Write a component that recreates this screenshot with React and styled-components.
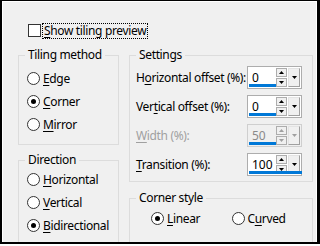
import React from "react";
import styled, { createGlobalStyle } from "styled-components";

const Global = createGlobalStyle`
  html, body { margin: 0; padding: 0; background: #fff; }
  body { font-family: "Noto Sans", "Open Sans", sans-serif; font-size: 12px; letter-spacing: -0.35px; color: #000; white-space: nowrap; }
`;

const Outer = styled.div`
  width: 320px;
  height: 244px;
  box-sizing: border-box;
  border: 2px solid #000;
  border-top-width: 1px;
  border-right-width: 3px;
  overflow: hidden;
`;

const Inner = styled.div`
  height: 100%;
  box-sizing: border-box;
  border-left: 1px solid #fff;
  border-top: 1px solid #fff;
  border-right: 1px solid #fff;
  background: #f0f0f0;
  padding: 21px 0 0 15px;
  display: flex;
  flex-direction: column;
`;

const CheckRow = styled.label`
  display: flex;
  align-items: center;
  margin-left: 10px;
  height: 15px;
`;

const CheckBox = styled.span`
  width: 11px;
  height: 11px;
  border: 1px solid #333;
  background: #fff;
  flex: none;
`;

const Focus = styled.span`
  margin-left: 2px;
  padding: 0 1px;
  outline: 1px dotted #000;
  line-height: 14px;
`;

const U = styled.span`
  text-decoration: underline;
  text-underline-offset: 2px;
`;

const Columns = styled.div`
  display: flex;
  gap: 10px;
  margin-top: 10px;
  flex: 1;
`;

const Col = styled.div`
  display: flex;
  flex-direction: column;
  width: ${(p) => p.$w}px;
  gap: ${(p) => p.$gap}px;
`;

const Group = styled.fieldset`
  margin: 0;
  padding: 0 0 0 6px;
  border: 1px solid #dcdcdc;
  ${(p) => (p.$open ? "border-bottom: none; flex: 1;" : "")}
  height: ${(p) => (p.$h ? p.$h + "px" : "auto")};
  box-sizing: border-box;
  min-width: 0;
`;

const Legend = styled.legend`
  padding: 0 3px;
  line-height: 14px;
`;

const RadioList = styled.div`
  display: flex;
  flex-direction: column;
  gap: 7px;
  padding: ${(p) => p.$top}px 0 0 2px;
`;

const RadioRow = styled.label`
  display: flex;
  align-items: center;
  gap: 3px;
  height: 16px;
`;

const RadioCircle = styled.span`
  width: 11px;
  height: 11px;
  border: 1px solid #333;
  border-radius: 50%;
  background: #fff;
  display: flex;
  align-items: center;
  justify-content: center;
  flex: none;
  &::after {
    content: "";
    width: 5px;
    height: 5px;
    border-radius: 50%;
    background: ${(p) => (p.$on ? "#000" : "transparent")};
  }
`;

const Radio = ({ on, children }) => (
  <RadioRow>
    <RadioCircle $on={on} />
    <span>{children}</span>
  </RadioRow>
);

const SettingList = styled.div`
  display: flex;
  flex-direction: column;
  gap: 6px;
  padding: 4px 0 0 0;
`;

const SettingRow = styled.div`
  display: flex;
  align-items: center;
  justify-content: space-between;
  padding-right: 10px;
  color: ${(p) => (p.$disabled ? "#a0a0a0" : "#000")};
`;

const Spin = styled.div`
  position: relative;
  width: 55px;
  height: 23px;
  box-sizing: border-box;
  border: 1px solid ${(p) => (p.$disabled ? "#cfcfcf" : "#adadad")};
  background: ${(p) => (p.$disabled ? "#f0f0f0" : "#fff")};
  display: flex;
  align-items: center;
  padding: 0 1px 0 4px;
`;

const Value = styled.span`
  flex: 1;
  font-size: 12px;
  letter-spacing: 0;
  color: ${(p) => (p.$disabled ? "#8a8a8a" : "#000")};
`;

const Bar = styled.span`
  position: absolute;
  left: 1px;
  bottom: 1px;
  height: 3px;
  background: #0078d7;
`;

const Arrows = styled.div`
  display: flex;
  flex-direction: column;
  gap: 1px;
  margin-right: 1px;
`;

const ArrowBtn = styled.span`
  width: 9px;
  height: 7px;
  border: 1px solid #adadad;
  background: #f0f0f0;
  display: flex;
  align-items: center;
  justify-content: center;
`;

const DropBtn = styled.span`
  width: 10px;
  height: 17px;
  border: 1px solid #e3e3e3;
  border-right-color: #a0a0a0;
  border-bottom-color: #a0a0a0;
  background: #f0f0f0;
  display: flex;
  align-items: center;
  justify-content: center;
`;

const Tri = ({ dir, color }) => (
  <svg width="5" height="3" viewBox="0 0 5 3">
    {dir === "up" ? (
      <polygon points="0,3 5,3 2.5,0" fill={color} />
    ) : (
      <polygon points="0,0 5,0 2.5,3" fill={color} />
    )}
  </svg>
);

const SpinBox = ({ value, pct, disabled }) => {
  const c = disabled ? "#a0a0a0" : "#000";
  return (
    <Spin $disabled={disabled}>
      <Value $disabled={disabled}>{value}</Value>
      <Arrows>
        <ArrowBtn>
          <Tri dir="up" color={c} />
        </ArrowBtn>
        <ArrowBtn>
          <Tri dir="down" color={c} />
        </ArrowBtn>
      </Arrows>
      <DropBtn>
        <Tri dir="down" color={c} />
      </DropBtn>
      <Bar style={{ width: `${pct * 53}px` }} />
    </Spin>
  );
};

const CornerRow = styled.div`
  display: flex;
  padding: 5px 0 0 15px;
`;

const CornerCell = styled.div`
  width: 82px;
`;

const settings = [
  { label: <>H<U>o</U>rizontal offset (%):</>, value: "0", pct: 0.5 },
  { label: <>Ver<U>t</U>ical offset (%):</>, value: "0", pct: 0.5 },
  { label: <><U>W</U>idth (%):</>, value: "50", pct: 0.5, disabled: true },
  { label: <><U>T</U>ransition (%):</>, value: "100", pct: 1 },
];

export default function App() {
  return (
    <>
      <Global />
      <Outer>
        <Inner>
          <CheckRow>
            <CheckBox />
            <Focus>
              <U>S</U>how tiling preview
            </Focus>
          </CheckRow>
          <Columns>
            <Col $w={101} $gap={8}>
              <Group $h={97}>
                <Legend>Tiling method</Legend>
                <RadioList $top={8}>
                  <Radio><U>E</U>dge</Radio>
                  <Radio on><U>C</U>orner</Radio>
                  <Radio><U>M</U>irror</Radio>
                </RadioList>
              </Group>
              <Group $open>
                <Legend>Direction</Legend>
                <RadioList $top={4}>
                  <Radio><U>H</U>orizontal</Radio>
                  <Radio><U>V</U>ertical</Radio>
                  <Radio on><U>B</U>idirectional</Radio>
                </RadioList>
              </Group>
            </Col>
            <Col $w={184} $gap={9}>
              <Group $h={134}>
                <Legend>Settings</Legend>
                <SettingList>
                  {settings.map((s, i) => (
                    <SettingRow key={i} $disabled={s.disabled}>
                      <span>{s.label}</span>
                      <SpinBox value={s.value} pct={s.pct} disabled={s.disabled} />
                    </SettingRow>
                  ))}
                </SettingList>
              </Group>
              <Group $open>
                <Legend>Corner style</Legend>
                <CornerRow>
                  <CornerCell>
                    <Radio on><U>L</U>inear</Radio>
                  </CornerCell>
                  <CornerCell>
                    <Radio>C<U>u</U>rved</Radio>
                  </CornerCell>
                </CornerRow>
              </Group>
            </Col>
          </Columns>
        </Inner>
      </Outer>
    </>
  );
}
